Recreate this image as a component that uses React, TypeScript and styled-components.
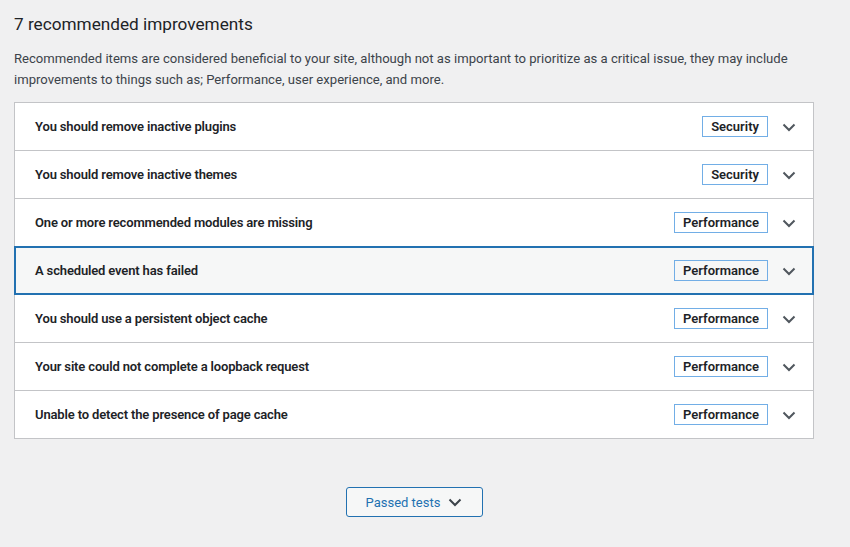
import { FC } from 'react'
import styled, { createGlobalStyle } from 'styled-components'

const GlobalStyle = createGlobalStyle`
  html, body {
    margin: 0;
    background: #f0f0f1;
    font-family: Roboto, "Liberation Sans", sans-serif;
    color: #1d2327;
  }
`

type Issue = {
  label: string
  badge: 'Security' | 'Performance'
  focused?: boolean
}

const ISSUES: Issue[] = [
  { label: 'You should remove inactive plugins', badge: 'Security' },
  { label: 'You should remove inactive themes', badge: 'Security' },
  { label: 'One or more recommended modules are missing', badge: 'Performance' },
  { label: 'A scheduled event has failed', badge: 'Performance', focused: true },
  { label: 'You should use a persistent object cache', badge: 'Performance' },
  { label: 'Your site could not complete a loopback request', badge: 'Performance' },
  { label: 'Unable to detect the presence of page cache', badge: 'Performance' },
]

const Chevron: FC<{ color?: string }> = ({ color = '#50575e' }) => (
  <svg width="14" height="14" viewBox="0 0 14 14" fill="none">
    <polyline points="1.5,4.5 7,10 12.5,4.5" stroke={color} strokeWidth="2" strokeLinejoin="miter" />
  </svg>
)

const App: FC = () => (
  <>
    <GlobalStyle />
    <Page>
      <Heading>7 recommended improvements</Heading>
      <Intro>
        Recommended items are considered beneficial to your site, although not as important to prioritize as a
        critical issue, they may include improvements to things such as; Performance, user experience, and more.
      </Intro>
      <Accordion>
        {ISSUES.map((issue) => (
          <Row key={issue.label}>
            <Trigger $focused={issue.focused}>
              <Title>{issue.label}</Title>
              <Badge>{issue.badge}</Badge>
              <IconWrap>
                <Chevron />
              </IconWrap>
            </Trigger>
          </Row>
        ))}
      </Accordion>
      <Footer>
        <ToggleButton>
          Passed tests
          <Chevron color="#3c434a" />
        </ToggleButton>
      </Footer>
    </Page>
  </>
)

const Page = styled.div`
  padding: 0 14px;
  width: 800px;
`

const Heading = styled.h2`
  margin: 12px 0 0;
  font-size: 17.2px;
  font-weight: 400;
  line-height: 24px;
  color: #1d2327;
`

const Intro = styled.p`
  margin: 12px 0 12px;
  font-size: 13.1px;
  line-height: 21px;
  color: #3c434a;
`

const Accordion = styled.div`
  border: 1px solid #c3c4c7;
  background: #fff;
`

const Row = styled.div`
  & + & {
    border-top: 1px solid #c3c4c7;
  }
`

const Trigger = styled.div<{ $focused?: boolean }>`
  display: flex;
  align-items: center;
  height: 47px;
  padding: 0 17px 0 20px;
  position: relative;
  z-index: ${({ $focused }) => ($focused ? 1 : 0)};
  background: ${({ $focused }) => ($focused ? '#f6f7f7' : '#fff')};
  box-shadow: ${({ $focused }) =>
    $focused ? '0 0 0 1px #2271b1, inset 0 0 0 1px #2271b1' : 'none'};
`

const Title = styled.span`
  flex: 1;
  font-size: 13px;
  font-weight: 600;
  letter-spacing: -0.15px;
  color: #1d2327;
`

const Badge = styled.span`
  border: 1px solid #72aee6;
  padding: 0 8px;
  line-height: 19px;
  font-size: 13px;
  font-weight: 600;
  color: #1d2327;
`

const IconWrap = styled.span`
  display: flex;
  margin-left: 14px;
`

const Footer = styled.div`
  display: flex;
  justify-content: center;
  margin-top: 48px;
`

const ToggleButton = styled.button`
  display: flex;
  align-items: center;
  justify-content: center;
  gap: 8px;
  width: 137px;
  height: 30px;
  border: 1px solid #2271b1;
  border-radius: 3px;
  background: #f6f7f7;
  color: #2271b1;
  font-family: Roboto, "Liberation Sans", sans-serif;
  font-size: 13px;
  cursor: pointer;
  padding: 0;
`

export default App
